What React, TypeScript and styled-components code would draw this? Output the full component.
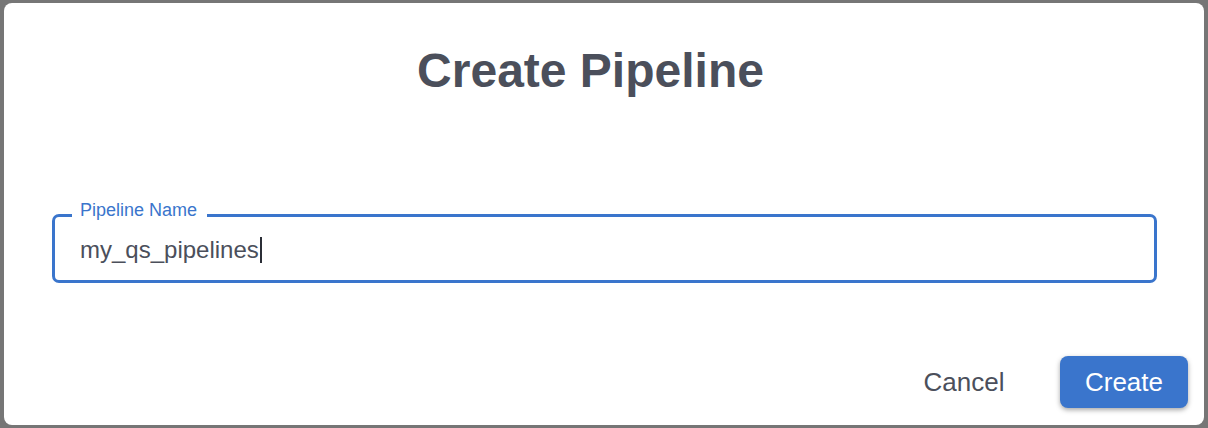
import React from 'react'
import styled, { createGlobalStyle } from 'styled-components'

const GlobalStyle = createGlobalStyle`
    html, body {
        margin: 0;
        padding: 0;
        background: #767676;
        font-family: "Liberation Sans", Arial, Helvetica, sans-serif;
    }
    * {
        box-sizing: border-box;
    }
`

const Backdrop = styled.div`
    width: 1208px;
    height: 428px;
    padding: 3px 4px;
`

const Dialog = styled.div`
    width: 1200px;
    height: 422px;
    background: #ffffff;
    border-radius: 8px;
    display: flex;
    flex-direction: column;
    padding: 40px 16px 17px 48px;
`

const Title = styled.h1`
    margin: 0;
    height: 56px;
    font-size: 48px;
    line-height: 56px;
    font-weight: 700;
    color: #4b4f5b;
    text-align: center;
    padding-right: 59px;
`

const Field = styled.div`
    position: relative;
    margin: 115px 31px 0 0;
    height: 69px;
    border: 3px solid #3a75cc;
    border-radius: 7px;
    display: flex;
    align-items: center;
    padding: 2px 0 0 25px;
`

const FieldLabel = styled.label`
    position: absolute;
    top: -17px;
    left: 17px;
    padding: 0 10px 0 8px;
    background: #ffffff;
    font-size: 18px;
    line-height: 21px;
    color: #3a75cc;
`

const FieldValue = styled.div`
    font-size: 24px;
    line-height: 28px;
    color: #4b4f5b;
    display: flex;
    align-items: center;
`

const Caret = styled.span`
    display: inline-block;
    width: 2px;
    height: 26px;
    margin-left: 1px;
    background: #2b2e36;
`

const Footer = styled.div`
    margin-top: 73px;
    display: flex;
    justify-content: flex-end;
    gap: 32px;
`

const Button = styled.button<{ $primary?: boolean }>`
    width: 128px;
    height: 52px;
    border: none;
    border-radius: 8px;
    font-family: inherit;
    font-size: 26px;
    line-height: 52px;
    padding: 0;
    cursor: pointer;
    background: ${({ $primary }) => ($primary ? '#3a75cc' : 'transparent')};
    color: ${({ $primary }) => ($primary ? '#ffffff' : '#4b4f5b')};
    box-shadow: ${({ $primary }) => ($primary ? '0 2px 5px rgba(0, 0, 0, 0.35)' : 'none')};
`

const App: React.FC = () => {
    return (
        <>
            <GlobalStyle />
            <Backdrop>
                <Dialog>
                    <Title>Create Pipeline</Title>
                    <Field>
                        <FieldLabel>Pipeline Name</FieldLabel>
                        <FieldValue>
                            my_qs_pipelines
                            <Caret />
                        </FieldValue>
                    </Field>
                    <Footer>
                        <Button>Cancel</Button>
                        <Button $primary>Create</Button>
                    </Footer>
                </Dialog>
            </Backdrop>
        </>
    )
}

export default App
